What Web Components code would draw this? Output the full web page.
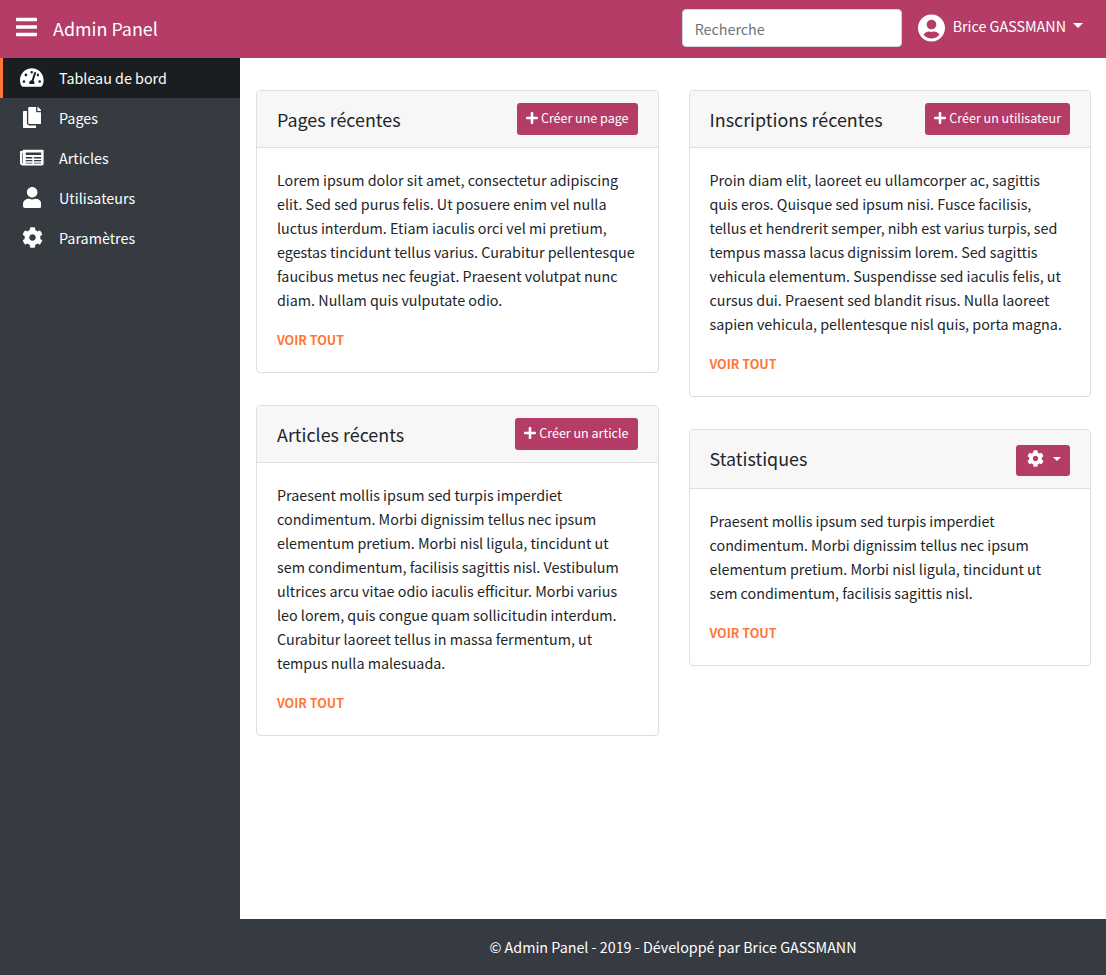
<!DOCTYPE html>
<html lang="fr">
<head>
<meta charset="utf-8">
<meta name="viewport" content="width=device-width, initial-scale=1">
<title>Admin Panel</title>
<style>
  :root { --primary: #b43c67; --dark: #363a41; --accent: #ff7637; --line: #dfdfdf; --ink: #212529; }
  body { margin: 0; color: var(--ink); background: #fff; font: 16px/24px "Source Sans Pro", "Noto Sans CJK JP", "Noto Sans", sans-serif; font-size-adjust: 0.486; }
</style>
</head>
<body>
<admin-app>
  <admin-navbar slot="navbar"></admin-navbar>
  <admin-sidebar slot="sidebar">
    <nav-item icon="gauge" active>Tableau de bord</nav-item>
    <nav-item icon="copy">Pages</nav-item>
    <nav-item icon="news">Articles</nav-item>
    <nav-item icon="user">Utilisateurs</nav-item>
    <nav-item icon="cog">Paramètres</nav-item>
  </admin-sidebar>
  <panel-column>
    <panel-card heading="Pages récentes">
      <panel-button slot="action" icon="plus">Créer une page</panel-button>
      Lorem ipsum dolor sit amet, consectetur adipiscing elit. Sed sed purus felis. Ut posuere enim vel nulla luctus interdum. Etiam iaculis orci vel mi pretium, egestas tincidunt tellus varius. Curabitur pellentesque faucibus metus nec feugiat. Praesent volutpat nunc diam. Nullam quis vulputate odio.
    </panel-card>
    <panel-card heading="Articles récents">
      <panel-button slot="action" icon="plus">Créer un article</panel-button>
      Praesent mollis ipsum sed turpis imperdiet condimentum. Morbi dignissim tellus nec ipsum elementum pretium. Morbi nisl ligula, tincidunt ut sem condimentum, facilisis sagittis nisl. Vestibulum ultrices arcu vitae odio iaculis efficitur. Morbi varius leo lorem, quis congue quam sollicitudin interdum. Curabitur laoreet tellus in massa fermentum, ut tempus nulla malesuada.
    </panel-card>
  </panel-column>
  <panel-column>
    <panel-card heading="Inscriptions récentes">
      <panel-button slot="action" icon="plus">Créer un utilisateur</panel-button>
      Proin diam elit, laoreet eu ullamcorper ac, sagittis quis eros. Quisque sed ipsum nisi. Fusce facilisis, tellus et hendrerit semper, nibh est varius turpis, sed tempus massa lacus dignissim lorem. Sed sagittis vehicula elementum. Suspendisse sed iaculis felis, ut cursus dui. Praesent sed blandit risus. Nulla laoreet sapien vehicula, pellentesque nisl quis, porta magna.
    </panel-card>
    <panel-card heading="Statistiques">
      <panel-button slot="action" icon="cog" menu label="Options des statistiques"></panel-button>
      Praesent mollis ipsum sed turpis imperdiet condimentum. Morbi dignissim tellus nec ipsum elementum pretium. Morbi nisl ligula, tincidunt ut sem condimentum, facilisis sagittis nisl.
    </panel-card>
  </panel-column>
  <admin-footer slot="footer">© Admin Panel - 2019 - Développé par Brice GASSMANN</admin-footer>
</admin-app>

<script>
const ICONS = {
  bars: ['0 0 448 512', 'M16 132h416c8.837 0 16-7.163 16-16V76c0-8.837-7.163-16-16-16H16C7.163 60 0 67.163 0 76v40c0 8.837 7.163 16 16 16zm0 160h416c8.837 0 16-7.163 16-16v-40c0-8.837-7.163-16-16-16H16c-8.837 0-16 7.163-16 16v40c0 8.837 7.163 16 16 16zm0 160h416c8.837 0 16-7.163 16-16v-40c0-8.837-7.163-16-16-16H16c-8.837 0-16 7.163-16 16v40c0 8.837 7.163 16 16 16z'],
  gauge: ['0 0 576 512', 'M288 32C128.94 32 0 160.94 0 320c0 52.8 14.25 102.26 39.06 144.8 5.61 9.62 16.3 15.2 27.44 15.2h443c11.14 0 21.83-5.58 27.44-15.2C561.75 422.26 576 372.8 576 320c0-159.06-128.94-288-288-288zm0 64c14.71 0 26.58 10.13 30.32 23.65-1.11 2.26-2.64 4.23-3.45 6.67l-9.22 27.67c-5.13 3.49-10.97 6.01-17.64 6.01-17.67 0-32-14.33-32-32S270.33 96 288 96zM96 384c-17.67 0-32-14.33-32-32s14.33-32 32-32 32 14.33 32 32-14.33 32-32 32zm48-160c-17.67 0-32-14.33-32-32s14.33-32 32-32 32 14.33 32 32-14.33 32-32 32zm246.77-72.41l-61.33 184C343.13 347.33 352 364.54 352 384c0 11.72-3.38 22.55-8.88 32H232.88c-5.5-9.45-8.88-20.28-8.88-32 0-33.94 26.5-61.43 59.9-63.59l61.34-184.01c4.17-12.56 17.73-19.45 30.36-15.17 12.57 4.19 19.35 17.79 15.17 30.36zm14.66 57.2l15.52-46.55c3.47-1.29 7.13-2.23 11.05-2.23 17.67 0 32 14.33 32 32s-14.33 32-32 32c-11.38-.01-20.89-6.28-26.57-15.22zM480 384c-17.67 0-32-14.33-32-32s14.33-32 32-32 32 14.33 32 32-14.33 32-32 32z'],
  copy: ['0 0 448 512', 'M320 448v40c0 13.255-10.745 24-24 24H24c-13.255 0-24-10.745-24-24V120c0-13.255 10.745-24 24-24h72v296c0 30.879 25.121 56 56 56h168zm0-344V0H152c-13.255 0-24 10.745-24 24v368c0 13.255 10.745 24 24 24h272c13.255 0 24-10.745 24-24V128H344c-13.2 0-24-10.8-24-24zm120.971-31.029L375.029 7.029A24 24 0 0 0 358.059 0H352v96h96v-6.059a24 24 0 0 0-7.029-16.97z'],
  news: ['0 0 576 512', 'M552 64H88c-13.255 0-24 10.745-24 24v8H24c-13.255 0-24 10.745-24 24v272c0 30.928 25.072 56 56 56h472c26.51 0 48-21.49 48-48V88c0-13.255-10.745-24-24-24zM56 400a8 8 0 0 1-8-8V144h16v248a8 8 0 0 1-8 8zM140 132H516V196H140zM140 244H300V280H140zM340 244H516V280H340zM140 316H300V346H140zM340 316H516V346H340zM140 382H300V404H140zM340 382H516V404H340z'],
  user: ['0 0 448 512', 'M224 256c70.7 0 128-57.3 128-128S294.7 0 224 0 96 57.3 96 128s57.3 128 128 128zm89.6 32h-16.7c-22.2 10.2-46.9 16-72.9 16s-50.6-5.8-72.9-16h-16.7C60.2 288 0 348.2 0 422.4V464c0 26.5 21.5 48 48 48h352c26.5 0 48-21.5 48-48v-41.6c0-74.2-60.2-134.4-134.4-134.4z'],
  cog: ['0 0 512 512', 'M487.4 315.7l-42.6-24.6c4.3-23.2 4.3-47 0-70.2l42.6-24.6c4.9-2.8 7.1-8.6 5.5-14-11.1-35.6-30-67.8-54.7-94.6-3.8-4.1-10-5.1-14.8-2.3L380.8 110c-17.9-15.4-38.5-27.3-60.8-35.1V25.8c0-5.6-3.9-10.5-9.4-11.7-36.7-8.2-74.3-7.8-109.2 0-5.5 1.2-9.4 6.1-9.4 11.7V75c-22.2 7.9-42.8 19.8-60.8 35.1L88.7 85.5c-4.9-2.8-11-1.9-14.8 2.3-24.7 26.7-43.6 58.9-54.7 94.6-1.7 5.4.6 11.2 5.5 14L67.3 221c-4.3 23.2-4.3 47 0 70.2l-42.6 24.6c-4.9 2.8-7.1 8.6-5.5 14 11.1 35.6 30 67.8 54.7 94.6 3.8 4.1 10 5.1 14.8 2.3l42.6-24.6c17.9 15.4 38.5 27.3 60.8 35.1v49.2c0 5.6 3.9 10.5 9.4 11.7 36.7 8.2 74.3 7.8 109.2 0 5.5-1.2 9.4-6.1 9.4-11.7v-49.2c22.2-7.9 42.8-19.8 60.8-35.1l42.6 24.6c4.9 2.8 11 1.9 14.8-2.3 24.7-26.7 43.6-58.9 54.7-94.6 1.5-5.5-.7-11.3-5.6-14.1zM256 336c-44.1 0-80-35.9-80-80s35.9-80 80-80 80 35.9 80 80-35.9 80-80 80z'],
  plus: ['0 0 448 512', 'M416 208H272V64c0-17.67-14.33-32-32-32h-32c-17.67 0-32 14.33-32 32v144H32c-17.67 0-32 14.33-32 32v32c0 17.67 14.33 32 32 32h144v144c0 17.67 14.33 32 32 32h32c17.67 0 32-14.33 32-32V304h144c17.67 0 32-14.33 32-32v-32c0-17.67-14.33-32-32-32z'],
  account: ['0 0 496 512', 'M248 8C111 8 0 119 0 256s111 248 248 248 248-111 248-248S385 8 248 8zm0 96c48.6 0 88 39.4 88 88s-39.4 88-88 88-88-39.4-88-88 39.4-88 88-88zm0 344c-58.7 0-111.3-26.6-146.5-68.2 18.8-35.4 55.6-59.8 98.5-59.8 2.4 0 4.8.4 7.1 1.1 13 4.2 26.6 6.9 40.9 6.9 14.3 0 28-2.7 40.9-6.9 2.3-.7 4.7-1.1 7.1-1.1 42.9 0 79.7 24.4 98.5 59.8C359.3 421.4 306.7 448 248 448z'],
};
const icon = name => `<svg viewBox="${ICONS[name][0]}" aria-hidden="true"><path fill="currentColor" fill-rule="evenodd" d="${ICONS[name][1]}"/></svg>`;

const BASE = `
  *, *::before, *::after { box-sizing: border-box; }
  svg { display: block; flex: none; }
  button, input { font: inherit; color: inherit; margin: 0; }
  button { border: 0; background: none; padding: 0; cursor: pointer; }
  a { color: inherit; text-decoration: none; }
  .caret { border: 5px solid transparent; border-top-color: currentColor; border-bottom: 0; }
`;

class Base extends HTMLElement {
  connectedCallback() {
    if (this.shadowRoot) return;
    this.attachShadow({ mode: 'open' }).innerHTML = `<style>${BASE}${this.styles()}</style>${this.markup()}`;
  }
}

customElements.define('admin-app', class extends Base {
  styles() { return `
    :host { display: grid; grid-template: auto 1fr auto / 240px minmax(0, 1fr); min-height: 100vh; }
    .top { grid-column: 1 / -1; }
    .side { grid-row: 2 / 4; background: var(--dark); }
    main { display: grid; grid-template-columns: repeat(2, minmax(0, 1fr)); gap: 30px; align-items: start; padding: 32px 15px 32px 16px; }
  `; }
  markup() { return `
    <div class="top"><slot name="navbar"></slot></div>
    <div class="side"><slot name="sidebar"></slot></div>
    <main><slot></slot></main>
    <slot name="footer"></slot>
  `; }
});

customElements.define('admin-navbar', class extends Base {
  styles() { return `
    :host { display: block; }
    header { display: flex; align-items: center; height: 58px; padding: 0 23px 2px 16px; background: var(--primary); color: #fff; }
    .bars { padding-bottom: 2px; }
    .bars svg { width: 21px; height: 24px; }
    .brand { margin: 0 auto 0 16px; font-size: 20px; line-height: 32px; }
    input { width: 220px; height: 38px; padding: 6px 12px; border: 1px solid #ced4da; border-radius: 4px; background: #fff; color: #495057; }
    input::placeholder { color: #6c757d; opacity: 1; }
    .user { display: flex; align-items: center; margin-left: 16px; }
    .user svg { width: 27px; height: 28px; margin-right: 8px; }
    .user span { padding-bottom: 4px; }
    .caret { margin: 0 0 6px 7px; }
  `; }
  markup() { return `
    <header>
      <button class="bars" type="button" aria-label="Menu">${icon('bars')}</button>
      <a class="brand" href="#">Admin Panel</a>
      <input type="search" placeholder="Recherche" aria-label="Recherche">
      <button class="user" type="button" aria-haspopup="true">${icon('account')}<span>Brice GASSMANN</span><i class="caret"></i></button>
    </header>
  `; }
});

customElements.define('admin-sidebar', class extends Base {
  styles() { return `:host { display: block; color: #fff; } nav { display: flex; flex-direction: column; }`; }
  markup() { return `<nav aria-label="Navigation principale"><slot></slot></nav>`; }
});

customElements.define('nav-item', class extends Base {
  styles() { return `
    :host { display: block; }
    a { display: flex; align-items: center; gap: 12px; height: 40px; padding-left: 14px; border-left: 3px solid transparent; }
    .icon { display: flex; justify-content: center; width: 30px; padding-bottom: 1px; }
    svg { height: 21px; }
    :host([active]) a { background: #1b1e20; border-left-color: var(--accent); }
  `; }
  markup() { return `<a href="#"${this.hasAttribute('active') ? ' aria-current="page"' : ''}><span class="icon">${icon(this.getAttribute('icon'))}</span><span><slot></slot></span></a>`; }
});

customElements.define('panel-column', class extends Base {
  styles() { return `:host { display: flex; flex-direction: column; gap: 32px; }`; }
  markup() { return `<slot></slot>`; }
});

customElements.define('panel-card', class extends Base {
  styles() { return `
    :host { display: block; }
    section { border: 1px solid var(--line); border-radius: 4px; background: #fff; overflow: hidden; }
    header { display: flex; justify-content: space-between; align-items: flex-start; padding: 12px 20px; background: #f7f7f7; border-bottom: 1px solid var(--line); }
    h2 { margin: 0; font-size: 20px; line-height: 32px; font-weight: 400; }
    .body { padding: 20px; }
    p { margin: 0 0 16px; }
    .all { display: block; width: max-content; font-size: 14px; font-weight: 700; line-height: 24px; color: var(--accent); text-transform: uppercase; }
  `; }
  markup() { return `
    <section>
      <header><h2>${this.getAttribute('heading')}</h2><slot name="action"></slot></header>
      <div class="body"><p><slot></slot></p><a class="all" href="#">Voir tout</a></div>
    </section>
  `; }
});

customElements.define('panel-button', class extends Base {
  styles() { return `
    :host { display: block; }
    :host([menu]) { padding-top: 3px; }
    button { display: flex; align-items: center; gap: 3px; height: 32px; padding: 0 9px 2px; border-radius: 3px; background: var(--primary); color: #fff; font-size: 14px; line-height: 20px; }
    svg { width: 12px; height: 14px; }
    :host([menu]) button { height: 31px; gap: 9px; padding: 0 9px 4px 11px; }
    :host([menu]) svg { width: 17px; height: 17px; }
    .caret { border-width: 4px; border-bottom: 0; }
  `; }
  markup() {
    const menu = this.hasAttribute('menu');
    return `<button type="button"${menu ? ` aria-haspopup="true" aria-label="${this.getAttribute('label')}"` : ''}>${icon(this.getAttribute('icon'))}${menu ? '<i class="caret"></i>' : '<span><slot></slot></span>'}</button>`;
  }
});

customElements.define('admin-footer', class extends Base {
  styles() { return `:host { display: block; } footer { padding: 16px; background: var(--dark); color: #fff; text-align: center; }`; }
  markup() { return `<footer><slot></slot></footer>`; }
});
</script>
</body>
</html>
